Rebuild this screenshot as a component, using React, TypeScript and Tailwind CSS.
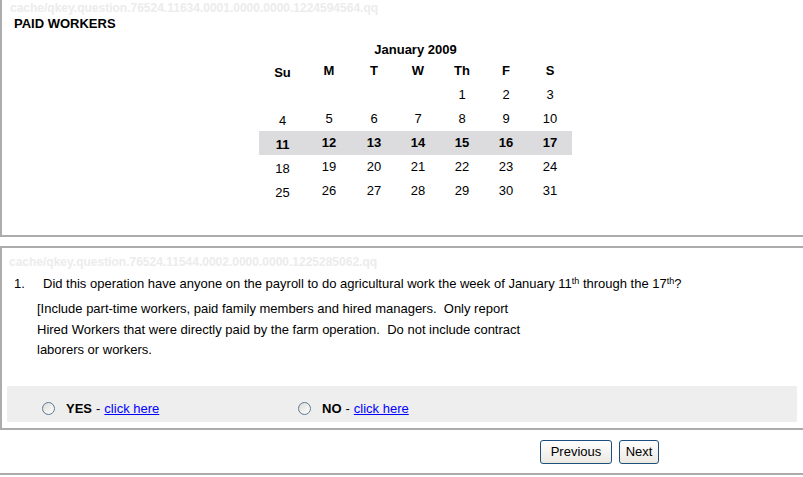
const weeks: (number | null)[][] = [
  [null, null, null, null, 1, 2, 3],
  [4, 5, 6, 7, 8, 9, 10],
  [11, 12, 13, 14, 15, 16, 17],
  [18, 19, 20, 21, 22, 23, 24],
  [25, 26, 27, 28, 29, 30, 31],
];

const days = ["Su", "M", "T", "W", "Th", "F", "S"];

function Calendar() {
  return (
    <div className="ml-[257px] mt-[4px] w-[313px]">
      <div className="h-[23px] pt-[4px] text-center text-[13px] font-bold text-black">January 2009</div>
      <div className="grid h-[24px] grid-cols-[47px_46px_44px_44px_44px_44px_44px] items-center text-center text-[13px] font-bold">
        {days.map((d, i) => (
          <div key={d} className={i === 0 ? "pt-[4px]" : ""}>
            {d}
          </div>
        ))}
      </div>
      {weeks.map((w, r) => (
        <div
          key={r}
          className={
            "grid h-[24px] grid-cols-[47px_46px_44px_44px_44px_44px_44px] items-center text-center text-[13px] " +
            (r === 2 ? "bg-[#dcdbdd] font-bold" : "")
          }
        >
          {w.map((n, i) => (
            <div key={i} className={i === 0 ? "pt-[4px]" : ""}>
              {n ?? ""}
            </div>
          ))}
        </div>
      ))}
    </div>
  );
}

function Radio() {
  return <span className="inline-block h-[13px] w-[13px] rounded-full border border-[#5a7a96] bg-gradient-to-br from-[#dcdcd6] to-white" />;
}

export default function App() {
  return (
    <div className="w-[803px] overflow-hidden bg-white font-['Liberation_Sans',Arial,sans-serif] text-black">
      <div className="h-[237px] w-[820px] border-b-2 border-l-2 border-[#acacac]">
        <div className="pl-[8px] pt-[1px] text-[12px] font-bold leading-[14px] text-[#ececec]">
          cache/qkey.question.76524.11634.0001.0000.0000.1224594564.qq
        </div>
        <div className="pl-[12px] pt-[1px] text-[13px] font-bold leading-[16px]">PAID WORKERS</div>
        <Calendar />
      </div>

      <div className="mt-[9px] h-[184px] w-[820px] border-y-2 border-l-2 border-[#acacac]">
        <div className="pl-[7px] pt-[7px] text-[12px] font-bold leading-[14px] text-[#ececec]">
          cache/qkey.question.76524.11544.0002.0000.0000.1225285062.qq
        </div>
        <div className="flex pl-[12px] pt-[7px] text-[13px] leading-[16px]">
          <span className="w-[29px]">1.</span>
          <span>
            Did this operation have anyone on the payroll to do agricultural work the week of January 11
            <sup className="text-[9px]">th</sup> through the 17<sup className="text-[9px]">th</sup>?
          </span>
        </div>
        <div className="pl-[35px] pt-[7px] text-[13px] leading-[20.5px]">
          [Include part-time workers, paid family members and hired managers.&nbsp; Only report
          <br />
          Hired Workers that were directly paid by the farm operation.&nbsp; Do not include contract
          <br />
          laborers or workers.
        </div>
        <div className="ml-[5px] mt-[25px] flex h-[36px] w-[790px] items-end bg-[#eeeeee] pb-[3px] text-[13px]">
          <div className="flex w-[291px] items-center pl-[35px]">
            <Radio />
            <span className="ml-[11px] font-bold">YES</span>
            <span className="mx-[4px]">-</span>
            <a href="#" className="text-[#0000ff] underline">
              click here
            </a>
          </div>
          <div className="flex items-center">
            <Radio />
            <span className="ml-[11px] font-bold">NO</span>
            <span className="mx-[4px]">-</span>
            <a href="#" className="text-[#0000ff] underline">
              click here
            </a>
          </div>
        </div>
      </div>

      <div className="flex h-[45px] items-center gap-[7px] border-b-2 border-[#acacac] pl-[540px] pt-[1px]">
        <button className="h-[24px] w-[72px] rounded-[3px] border border-[#1c4f7c] bg-gradient-to-b from-white to-[#ece9e2] text-[13px]">
          Previous
        </button>
        <button className="h-[24px] w-[40px] rounded-[3px] border border-[#1c4f7c] bg-gradient-to-b from-white to-[#ece9e2] text-[13px]">
          Next
        </button>
      </div>
    </div>
  );
}
